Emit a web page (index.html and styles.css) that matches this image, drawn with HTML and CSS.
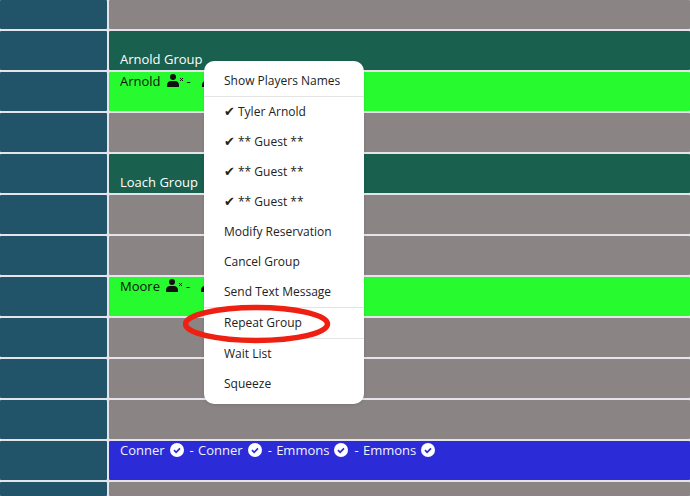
FILE: index.html
```html
<!DOCTYPE html>
<html lang="en">
<head>
<meta charset="utf-8">
<title>Tee sheet</title>
<link rel="stylesheet" href="styles.css">
</head>
<body>
<svg class="defs" width="0" height="0" aria-hidden="true">
  <symbol id="user-x" viewBox="0 0 17 13">
    <circle cx="6" cy="3" r="3"/>
    <path d="M0 13v-2C0 8.500 1.800 7 4 7h4c2.200 0 4 1.500 4 4v2z"/>
    <path d="M13 4l3 3m0-3l-3 3" fill="none" stroke="currentColor" stroke-width="1"/>
  </symbol>
  <symbol id="check" viewBox="0 0 14 14">
    <circle cx="7" cy="7" r="7" fill="#fff"/>
    <path d="M4 7.200l2.100 2.100L10 5.300" fill="none" stroke="#2b2bd8" stroke-width="1.700"/>
  </symbol>
</svg>
<main class="sheet">
  <div class="row row-first"><div class="time"></div><div class="slot"></div></div>
  <div class="row"><div class="time"></div><div class="slot slot-group"><span class="group-name">Arnold Group</span></div></div>
  <div class="row"><div class="time"></div><div class="slot slot-green"><span class="name">Arnold</span><svg class="ico-user"><use href="#user-x"/></svg><span class="dash">-</span><svg class="ico-user ico-next"><use href="#user-x"/></svg></div></div>
  <div class="row"><div class="time"></div><div class="slot"></div></div>
  <div class="row"><div class="time"></div><div class="slot slot-group"><span class="group-name">Loach Group</span></div></div>
  <div class="row"><div class="time"></div><div class="slot"></div></div>
  <div class="row"><div class="time"></div><div class="slot"></div></div>
  <div class="row"><div class="time"></div><div class="slot slot-green"><span class="name">Moore</span><svg class="ico-user"><use href="#user-x"/></svg><span class="dash">-</span><svg class="ico-user ico-next"><use href="#user-x"/></svg></div></div>
  <div class="row"><div class="time"></div><div class="slot"></div></div>
  <div class="row"><div class="time"></div><div class="slot"></div></div>
  <div class="row"><div class="time"></div><div class="slot"></div></div>
  <div class="row"><div class="time"></div><div class="slot slot-blue"><span class="name">Conner</span><svg class="ico-check"><use href="#check"/></svg><span class="dash">-</span><span class="name">Conner</span><svg class="ico-check"><use href="#check"/></svg><span class="dash">-</span><span class="name">Emmons</span><svg class="ico-check"><use href="#check"/></svg><span class="dash">-</span><span class="name">Emmons</span><svg class="ico-check"><use href="#check"/></svg></div></div>
  <div class="row row-last"><div class="time"></div><div class="slot"></div></div>
</main>
<nav class="menu">
  <div class="item item-head">Show Players Names</div>
  <div class="item"><span class="tick">✔</span>Tyler Arnold</div>
  <div class="item"><span class="tick">✔</span>** Guest **</div>
  <div class="item"><span class="tick">✔</span>** Guest **</div>
  <div class="item"><span class="tick">✔</span>** Guest **</div>
  <div class="item">Modify Reservation</div>
  <div class="item">Cancel Group</div>
  <div class="item item-send">Send Text Message</div>
  <div class="item item-repeat">Repeat Group</div>
  <div class="item">Wait List</div>
  <div class="item">Squeeze</div>
</nav>
<svg class="ring" viewBox="0 0 148 40" aria-hidden="true"><ellipse cx="73.500" cy="20" rx="71" ry="16.500" fill="none" stroke="#ee2012" stroke-width="5.500"/></svg>
</body>
</html>
```
FILE: styles.css
```css
* { box-sizing: border-box; }
html, body { margin: 0; height: 100%; overflow: hidden; }
body { position: relative; background: #8a8484; font-family: "Open Sans", sans-serif; font-size: 13px; }
.defs { position: absolute; }
.sheet { display: flex; flex-direction: column; height: 496px; overflow: hidden; }
.row { display: flex; height: 41px; flex: none; background: #e4e4ea; padding-bottom: 2px; gap: 2px; }
.row-first { height: 31px; }
.row-last { height: 14px; padding-bottom: 0; }
.time { width: 107px; flex: none; background: #215468; border-radius: 1px; }
.slot { flex: 1; background: #8a8484; padding: 0 11px; display: flex; align-items: flex-start; color: #111; line-height: 18px; border-radius: 1px; }
.slot-group { background: #19604e; color: #fff; align-items: flex-end; }
.slot-green { background: #27fb30; }
.slot-blue { background: #2b2bd8; color: #f2f2fa; }
.group-name { line-height: 18px; padding-bottom: 2px; }
.ico-user { width: 17px; height: 13px; margin: 2px 0 0 6px; fill: #111; color: #111; flex: none; }
.ico-next { margin-left: 11px; }
.dash { margin-left: 3px; }
.ico-check { width: 14px; height: 14px; margin: 2px 0 0 5px; flex: none; }
.slot-blue .dash { margin: 0 4.300px 0 6px; }
.menu { position: absolute; left: 204px; top: 61px; width: 160px; height: 343px; background: #fff; border-radius: 10px; padding: 5px 0 4px; color: #222; font-size: 12px; box-shadow: 0 1px 3px rgba(0,0,0,.12); }
.item { height: 30px; padding-left: 20px; line-height: 30px; white-space: nowrap; }
.item-head { height: 31px; border-bottom: 1px solid #e4e4e4; }
.item-send { border-bottom: 1px solid #e4e4e4; height: 31px; }
.item-repeat { border-bottom: 1px solid #e4e4e4; height: 31px; }
.tick { display: inline-block; width: 14px; font-family: "DejaVu Sans", sans-serif; font-size: 13px; }
.ring { position: absolute; left: 183px; top: 304px; width: 148px; height: 40px; }
```
